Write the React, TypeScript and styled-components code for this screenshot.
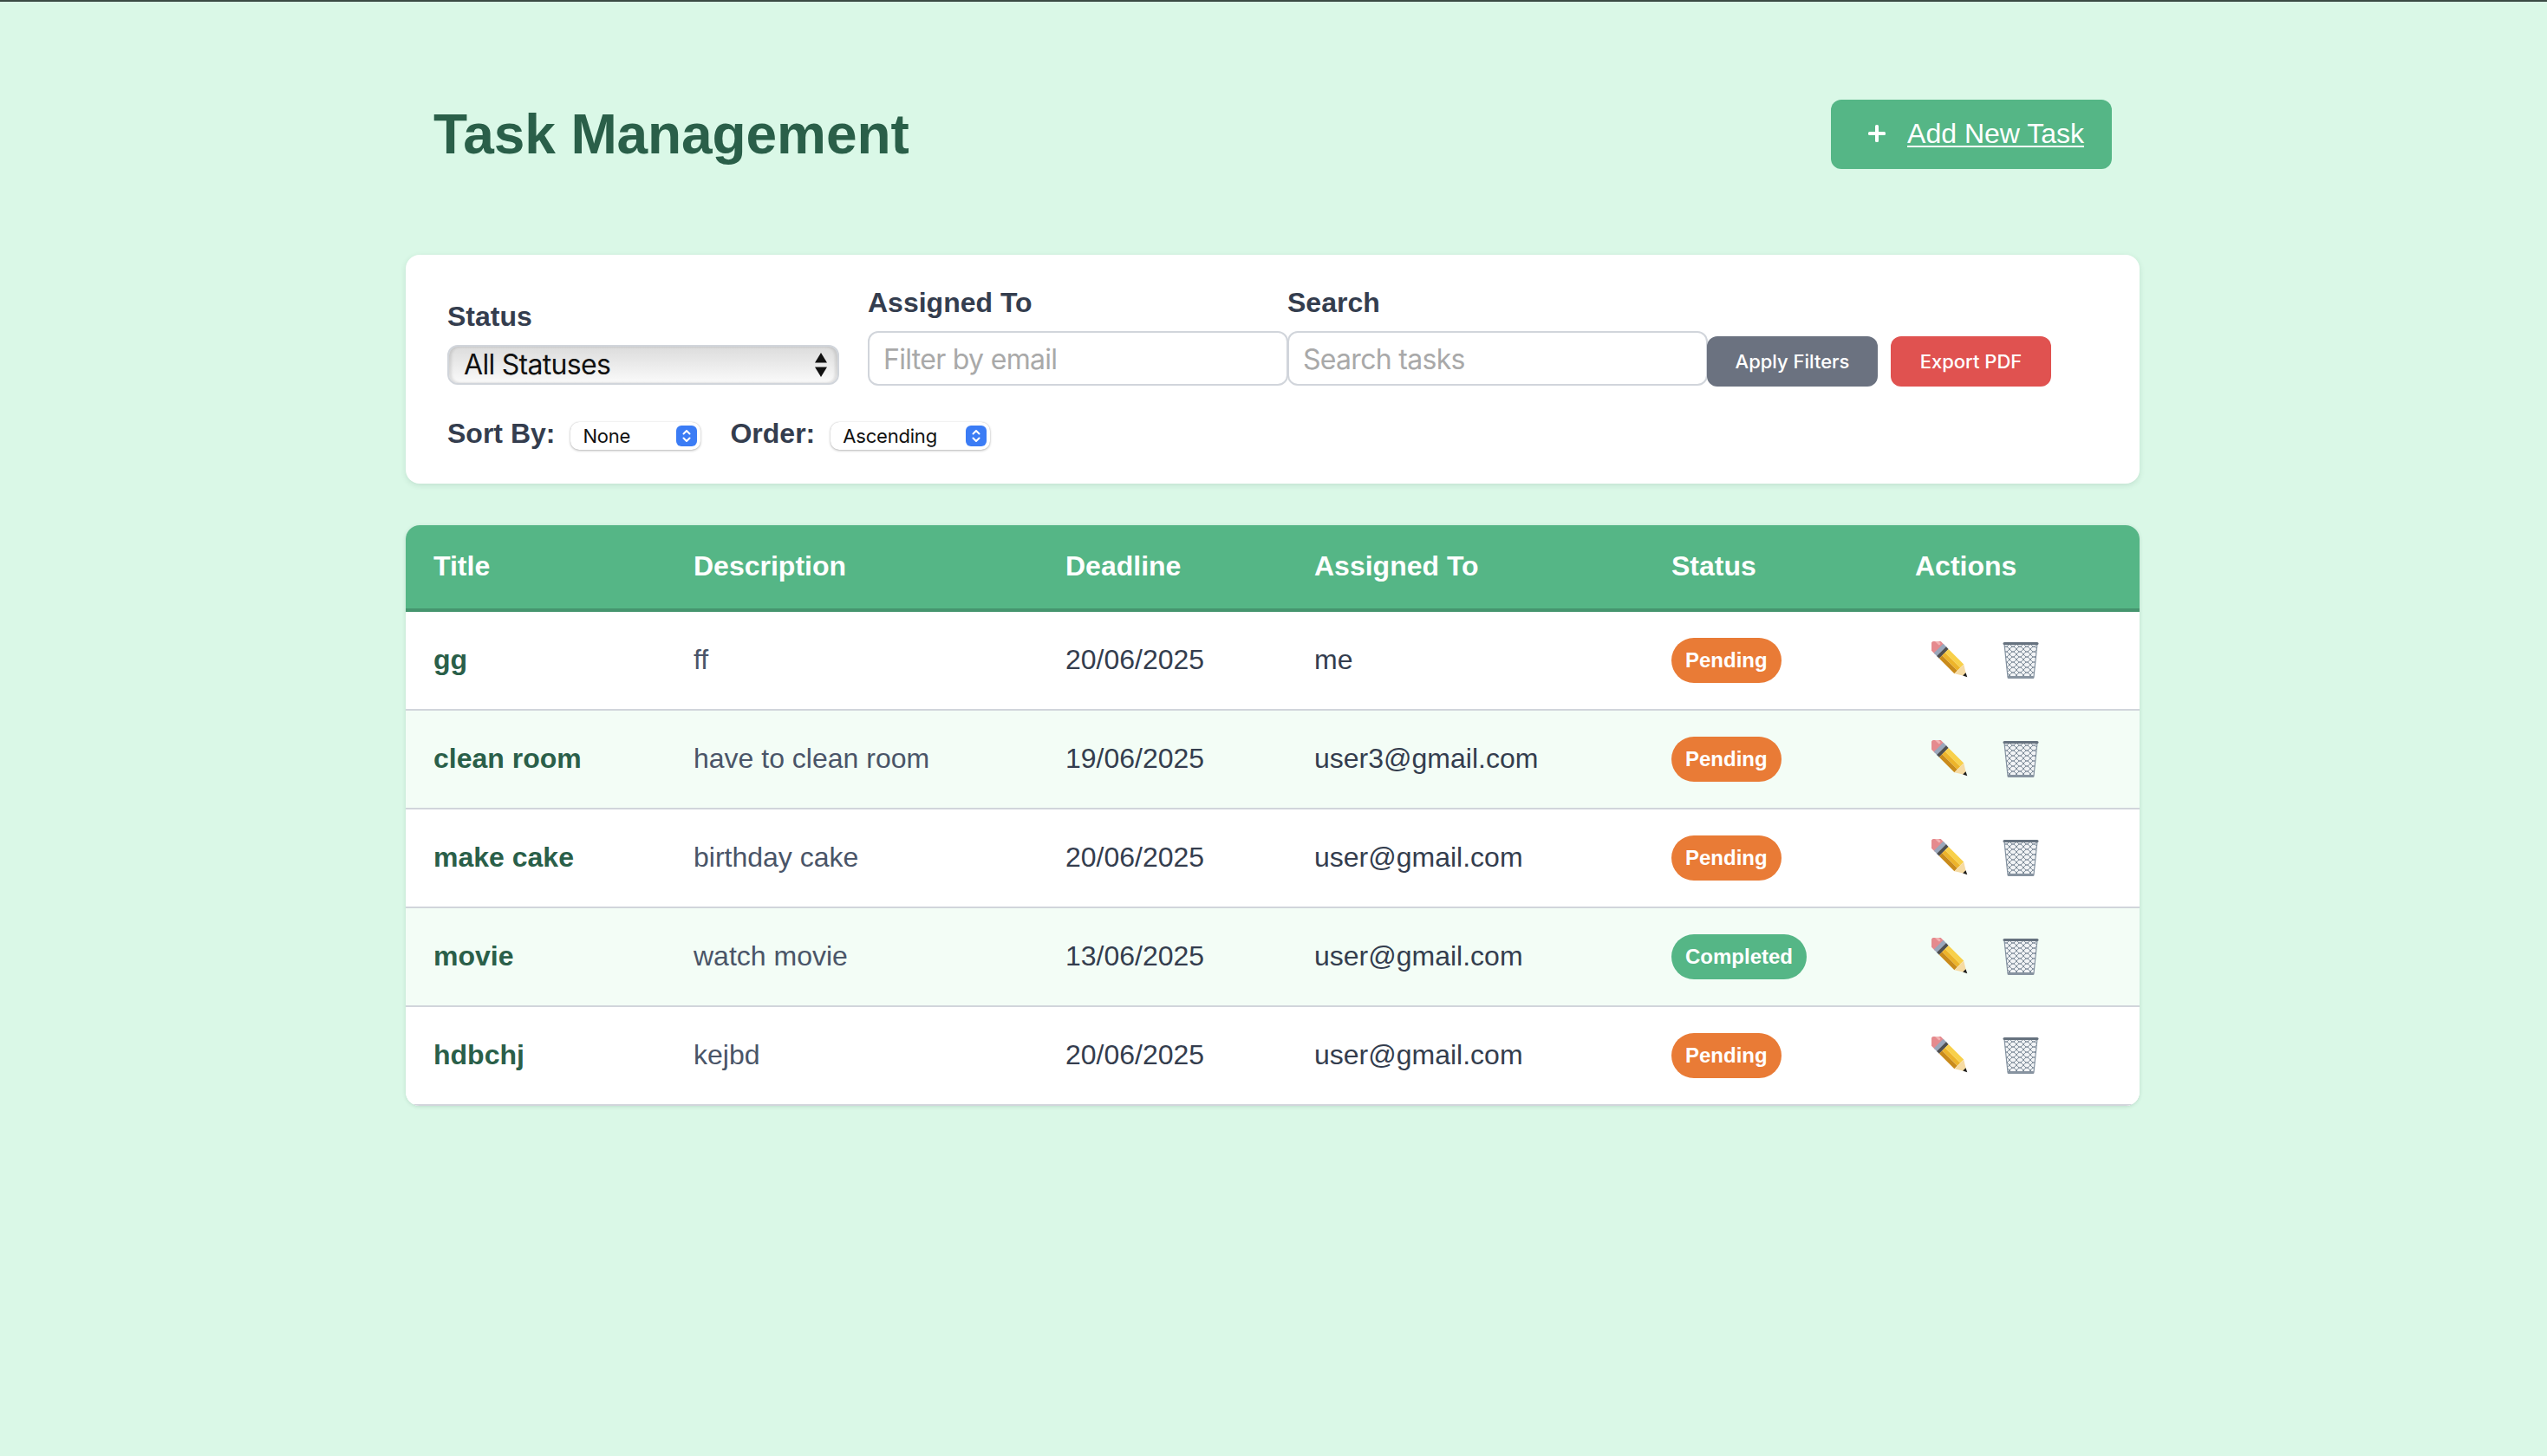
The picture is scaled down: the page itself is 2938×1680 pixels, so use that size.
import { createGlobalStyle } from "styled-components"
import styled from "styled-components"

const GlobalStyle = createGlobalStyle`
  html, body {
    margin: 0;
    padding: 0;
    background: #daf8e7;
    font-family: "Liberation Sans", Arial, sans-serif;
  }
  body {
    min-height: 1680px;
    box-sizing: border-box;
    border-top: 2px solid #3a4a44;
  }
`

const Page = styled.div`
  width: 2000px;
  margin-left: 468px;
  padding-top: 113px;
`

const Header = styled.header`
  display: flex;
  align-items: center;
  justify-content: space-between;
  padding: 0 32px;
  height: 80px;
  margin-bottom: 99px;
`

const Title = styled.h1`
  margin: 0;
  font-size: 64px;
  font-weight: 700;
  letter-spacing: -0.1px;
  color: #2a5f49;
`

const AddLink = styled.a`
  display: flex;
  align-items: center;
  gap: 25px;
  height: 80px;
  padding: 0 32px 2px 43px;
  box-sizing: border-box;
  background: #55b686;
  border-radius: 12px;
  color: #fff;
  font-size: 32px;
  text-decoration: underline;
  text-underline-offset: 3px;
  text-decoration-thickness: 2px;
`

const PlusMark = styled.span`
  display: inline-flex;
  text-decoration: none;
`

const FilterCard = styled.section`
  background: #fff;
  border-radius: 16px;
  padding: 36px 48px 38px 48px;
  height: 264px;
  box-sizing: border-box;
  box-shadow: 0 2px 6px rgba(40, 90, 70, 0.14);
  margin-bottom: 48px;
`

const FilterRow = styled.div`
  display: flex;
  align-items: flex-end;
`

const Field = styled.div<{ $width: number }>`
  display: flex;
  flex-direction: column;
  width: ${(p) => p.$width}px;
  flex: none;
`

const FieldLabel = styled.label`
  font-size: 32px;
  font-weight: 700;
  color: #343d4e;
  line-height: 39px;
  margin-bottom: 13px;
`

const StatusSelect = styled.div`
  position: relative;
  width: 452px;
  height: 46px;
  box-sizing: border-box;
  margin: 0 0 2px 0;
  border: 2px solid #d1d5db;
  border-radius: 12px;
  padding: 0 0 2px 17px;
  display: flex;
  align-items: center;
  font-family: Inter, "Noto Sans", sans-serif;
  font-size: 32px;
  letter-spacing: -0.7px;
  color: #111;
  background: linear-gradient(#dcdcdc, #fafafa);
  box-shadow: inset 3px 0 3px rgba(0, 0, 0, 0.1), inset -3px 0 3px rgba(0, 0, 0, 0.1);
`

const DoubleArrow = styled.svg`
  position: absolute;
  right: 12px;
  top: 7px;
`

const TextInput = styled.input`
  height: 63px;
  width: 485px;
  box-sizing: border-box;
  margin-bottom: 1px;
  border: 2px solid #d1d5db;
  border-radius: 12px;
  padding: 2px 16px 0;
  font-family: Inter, "Noto Sans", sans-serif;
  font-size: 32px;
  letter-spacing: -0.7px;
  background: #fff;
  outline: none;
  &::placeholder {
    color: #a9a9a9;
    opacity: 1;
  }
`

const ActionButton = styled.button<{ $bg: string; $width: number }>`
  height: 58px;
  width: ${(p) => p.$width}px;
  flex: none;
  border: none;
  border-radius: 12px;
  background: ${(p) => p.$bg};
  color: #fff;
  font-family: Inter, "Noto Sans", sans-serif;
  font-size: 22px;
  font-weight: 500;
  padding: 0;
  & + & {
    margin-left: 15px;
  }
`

const SortRow = styled.div`
  display: flex;
  align-items: center;
  margin-top: 37px;
`

const SortLabel = styled.span`
  font-size: 32px;
  font-weight: 700;
  color: #343d4e;
  position: relative;
  top: -1px;
`

const MiniSelect = styled.div<{ $width: number }>`
  position: relative;
  display: flex;
  align-items: center;
  width: ${(p) => p.$width}px;
  height: 32px;
  box-sizing: border-box;
  margin: 3px 34px 0 18px;
  padding-left: 14px;
  border-radius: 10px;
  background: #fff;
  box-shadow: 0 1px 3px rgba(0, 0, 0, 0.28), 0 0 1px rgba(0, 0, 0, 0.2);
  font-family: Inter, "Noto Sans", sans-serif;
  font-size: 22px;
  letter-spacing: -0.2px;
  color: #111;
`

const ChevronBox = styled.span`
  position: absolute;
  right: 4px;
  top: 4px;
  width: 24px;
  height: 24px;
  border-radius: 6px;
  background: #3b7cf5;
  display: flex;
  align-items: center;
  justify-content: center;
`

const TableCard = styled.div`
  border-radius: 16px;
  overflow: hidden;
  background: #fff;
  box-shadow: 0 1px 4px rgba(40, 90, 70, 0.16);
`

const Table = styled.table`
  width: 2000px;
  table-layout: fixed;
  border-collapse: separate;
  border-spacing: 0;
  font-size: 32px;
`

const HeadCell = styled.th`
  padding: 0 32px 2px;
  box-sizing: border-box;
  height: 100px;
  background: #55b686;
  border-bottom: 4px solid #45956e;
  color: #fff;
  font-weight: 700;
  text-align: left;
  &:nth-child(2) {
    padding-left: 31px;
  }
`

const Row = styled.tr<{ $alt: boolean }>`
  background: ${(p) => (p.$alt ? "#f3fdf6" : "#fff")};
`

const Cell = styled.td`
  height: 114px;
  box-sizing: border-box;
  padding: 0 32px 1px;
  border-bottom: 2px solid #d1d5db;
  color: #343d4e;
`

const TitleCell = styled(Cell)`
  font-weight: 700;
  color: #2a5f49;
`

const DescriptionCell = styled(Cell)`
  color: #4a5568;
  padding-left: 31px;
`

const Badge = styled.span<{ $done: boolean }>`
  display: inline-block;
  height: 52px;
  line-height: 52px;
  padding: 0 16px;
  border-radius: 26px;
  vertical-align: middle;
  background: ${(p) => (p.$done ? "#55b686" : "#e97b36")};
  color: #fff;
  font-size: 24px;
  font-weight: 700;
`

const Actions = styled.div`
  display: flex;
  align-items: center;
  gap: 40px;
  padding-left: 19px;
`

const IconBtn = styled.button`
  border: none;
  background: none;
  padding: 0;
  width: 42px;
  height: 44px;
  display: flex;
`

const columns = [301, 428, 287, 412, 281, 291]
const headers = ["Title", "Description", "Deadline", "Assigned To", "Status", "Actions"]

const tasks = [
  { title: "gg", description: "ff", deadline: "20/06/2025", assigned: "me", status: "Pending" },
  { title: "clean room", description: "have to clean room", deadline: "19/06/2025", assigned: "user3@gmail.com", status: "Pending" },
  { title: "make cake", description: "birthday cake", deadline: "20/06/2025", assigned: "user@gmail.com", status: "Pending" },
  { title: "movie", description: "watch movie", deadline: "13/06/2025", assigned: "user@gmail.com", status: "Completed" },
  { title: "hdbchj", description: "kejbd", deadline: "20/06/2025", assigned: "user@gmail.com", status: "Pending" }
]

function Chevrons() {
  return (
    <svg width="12" height="18" viewBox="0 0 12 18" fill="none" stroke="#fff" strokeWidth="2" strokeLinecap="round" strokeLinejoin="round">
      <path d="M2.5 6.5 6 3l3.5 3.5" />
      <path d="M2.5 11.5 6 15l3.5-3.5" />
    </svg>
  )
}

function PencilIcon() {
  return (
    <svg width="42" height="44" viewBox="-1 0 44 46">
      <g transform="rotate(45 21 22)">
        <path d="M4 14H-3a6 6 0 0 0-6 6v4a6 6 0 0 0 6 6H4Z" fill="#e58a8e" />
        <rect x="-8" y="16" width="8" height="3" rx="1.5" fill="#f3b3b3" />
        <rect x="2" y="14" width="6" height="16" fill="#9aa7bb" />
        <rect x="7" y="14" width="4" height="16" fill="#4f4f4f" />
        <rect x="11" y="14" width="26" height="6" fill="#f8d04a" />
        <rect x="11" y="20" width="26" height="5" fill="#edb42a" />
        <rect x="11" y="25" width="26" height="5" fill="#c98b1b" />
        <path d="M37 14 50 22 37 30Z" fill="#f6dba3" />
        <path d="M46 19.5 51 22 46 24.5Z" fill="#1d1d1d" />
      </g>
    </svg>
  )
}

function BinIcon() {
  return (
    <svg width="42" height="44" viewBox="0 0 42 44">
      <defs>
        <pattern id="mesh" width="8" height="6" patternUnits="userSpaceOnUse">
          <path d="M0 3Q2 0 4 0T8 3M0 3Q2 6 4 6T8 3" fill="none" stroke="#7a8896" strokeWidth="1" />
        </pattern>
      </defs>
      <path d="M2 3 6 41H36L40 3Z" fill="#f1f3f5" />
      <path d="M2 3 6 41H36L40 3Z" fill="url(#mesh)" />
      <path d="M2 3 6 41M40 3 36 41" stroke="#8492a0" strokeWidth="1.2" fill="none" />
      <rect x="0.5" y="1" width="41" height="3" rx="1.5" fill="#66727f" />
      <rect x="5.5" y="40" width="31" height="3" rx="1.5" fill="#8793a0" />
    </svg>
  )
}

export default function App() {
  return (
    <>
      <GlobalStyle />
      <Page>
        <Header>
          <Title>Task Management</Title>
          <AddLink href="#">
            <PlusMark>
              <svg width="20" height="20" viewBox="0 0 20 20" fill="#fff">
                <rect x="8" y="0" width="4" height="20" rx="1.5" />
                <rect x="0" y="8" width="20" height="4" rx="1.5" />
              </svg>
            </PlusMark>
            Add New Task
          </AddLink>
        </Header>

        <FilterCard>
          <FilterRow>
            <Field $width={485}>
              <FieldLabel>Status</FieldLabel>
              <StatusSelect>
                All Statuses
                <DoubleArrow width="14" height="28" viewBox="0 0 14 28" fill="#111">
                  <path d="M7 0 14 11.5H0Z" />
                  <path d="M7 28 14 16.5H0Z" />
                </DoubleArrow>
              </StatusSelect>
            </Field>
            <Field $width={484}>
              <FieldLabel>Assigned To</FieldLabel>
              <TextInput placeholder="Filter by email" />
            </Field>
            <Field $width={484}>
              <FieldLabel>Search</FieldLabel>
              <TextInput placeholder="Search tasks" />
            </Field>
            <ActionButton $bg="#6b7280" $width={197}>Apply Filters</ActionButton>
            <ActionButton $bg="#e05250" $width={185}>Export PDF</ActionButton>
          </FilterRow>
          <SortRow>
            <SortLabel>Sort By:</SortLabel>
            <MiniSelect $width={150}>
              None
              <ChevronBox><Chevrons /></ChevronBox>
            </MiniSelect>
            <SortLabel>Order:</SortLabel>
            <MiniSelect $width={184}>
              Ascending
              <ChevronBox><Chevrons /></ChevronBox>
            </MiniSelect>
          </SortRow>
        </FilterCard>

        <TableCard>
          <Table>
            <colgroup>
              {columns.map((w) => (
                <col key={w} width={w} />
              ))}
            </colgroup>
            <thead>
              <tr>
                {headers.map((h) => (
                  <HeadCell key={h}>{h}</HeadCell>
                ))}
              </tr>
            </thead>
            <tbody>
              {tasks.map((t, i) => (
                <Row key={t.title} $alt={i % 2 === 1}>
                  <TitleCell>{t.title}</TitleCell>
                  <DescriptionCell>{t.description}</DescriptionCell>
                  <Cell>{t.deadline}</Cell>
                  <Cell>{t.assigned}</Cell>
                  <Cell>
                    <Badge $done={t.status === "Completed"}>{t.status}</Badge>
                  </Cell>
                  <Cell>
                    <Actions>
                      <IconBtn aria-label="Edit"><PencilIcon /></IconBtn>
                      <IconBtn aria-label="Delete"><BinIcon /></IconBtn>
                    </Actions>
                  </Cell>
                </Row>
              ))}
            </tbody>
          </Table>
        </TableCard>
      </Page>
    </>
  )
}
